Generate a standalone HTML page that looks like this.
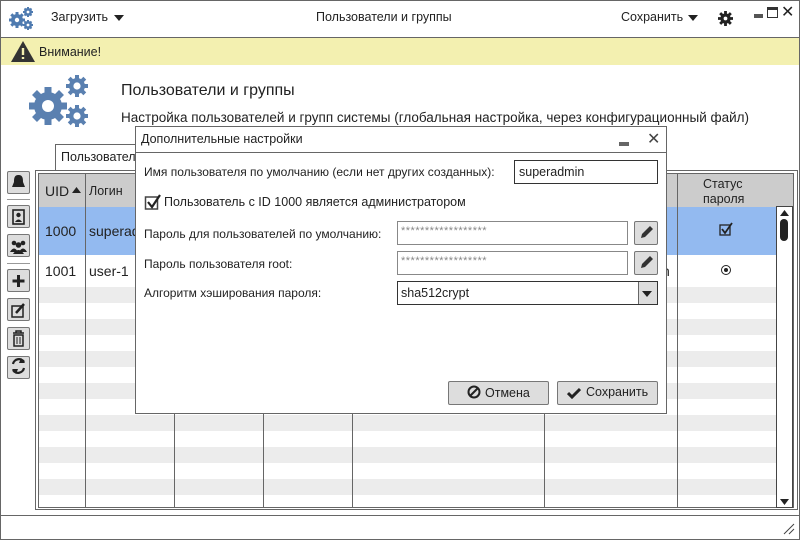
<!DOCTYPE html>
<html><head><meta charset="utf-8"><style>
*{box-sizing:border-box;margin:0;padding:0}
body{width:800px;height:540px;overflow:hidden;background:#fff;font-family:"Liberation Sans",sans-serif;font-size:12.5px;color:#222;position:relative}
.a{position:absolute}
.btn{position:absolute;background:#ddd;border:1px solid #777;border-radius:2px}
.hl{position:absolute;height:1px;background:#666}
.vl{position:absolute;width:1px;background:#666}
.t{position:absolute;white-space:nowrap}
</style></head><body>
<div class="a" style="left:0;top:0;width:800px;height:540px;border:1px solid #666"></div>
<!-- top bar -->
<svg class="a" style="left:8px;top:6px" width="28" height="26" viewBox="0 0 28 26"><g fill="#4f7bb0" stroke="#4f7bb0"><circle cx="9" cy="14" r="5.5"/><path d="M9 6V22M1 14H17M3.3 8.3L14.7 19.7M14.7 8.3L3.3 19.7" stroke-width="3"/><circle cx="20" cy="6" r="3.5"/><path d="M20 1V11M15 6H25M16.5 2.5L23.5 9.5M23.5 2.5L16.5 9.5" stroke-width="2"/><circle cx="20" cy="19" r="3.5"/><path d="M20 14V24M15 19H25M16.5 15.5L23.5 22.5M23.5 15.5L16.5 22.5" stroke-width="2"/></g><g fill="#fff"><circle cx="9" cy="14" r="2.2"/><circle cx="20" cy="6" r="1.4"/><circle cx="20" cy="19" r="1.4"/></g></svg>
<div class="t" style="left:51px;top:10px">Загрузить</div>
<svg class="a" style="left:114px;top:15px" width="10" height="6"><path d="M0 0H10L5 6Z" fill="#222"/></svg>
<div class="t" style="left:316px;top:10px">Пользователи и группы</div>
<div class="t" style="left:621px;top:10px">Сохранить</div>
<svg class="a" style="left:688px;top:15px" width="10" height="6"><path d="M0 0H10L5 6Z" fill="#222"/></svg>
<svg class="a" style="left:718px;top:11px" width="15" height="15" viewBox="0 0 16 16"><circle cx="8" cy="8" r="5.5" fill="#222"/><g stroke="#222" stroke-width="3"><path d="M8 0V16M0 8H16M2.3 2.3L13.7 13.7M13.7 2.3L2.3 13.7"/></g><circle cx="8" cy="8" r="2" fill="#fff"/></svg>
<div class="a" style="left:754px;top:14px;width:9px;height:4px;background:#555"></div>
<div class="a" style="left:767px;top:7px;width:11px;height:11px;border:1.5px solid #333;border-top-width:3px"></div>
<div class="t" style="left:781px;top:2px;font-size:16px">✕</div>
<div class="hl" style="left:0;top:37px;width:800px"></div>
<!-- warning -->
<div class="a" style="left:1px;top:38px;width:798px;height:27px;background:#f3f0b0"></div>
<svg class="a" style="left:10px;top:40px" width="26" height="23"><path d="M13 1L25 22H1Z" fill="#333"/><path d="M13 8V15M13 17V19" stroke="#f3f0b0" stroke-width="2.4"/></svg>
<div class="t" style="left:39px;top:45px">Внимание!</div>
<!-- header -->
<svg class="a" style="left:26px;top:74px" width="66" height="56" viewBox="0 0 66 56"><g fill="#5a80b0"><circle cx="22" cy="32" r="14"/><circle cx="51" cy="12" r="8"/><circle cx="51" cy="42" r="8"/></g><g stroke="#5a80b0" stroke-width="7"><path d="M22 13V51M3 32H41M8.5 18.5L35.5 45.5M35.5 18.5L8.5 45.5"/></g><g stroke="#5a80b0" stroke-width="4"><path d="M51 1V23M40 12H62M43.2 4.2L58.8 19.8M58.8 4.2L43.2 19.8M51 31V53M40 42H62M43.2 34.2L58.8 49.8M58.8 34.2L43.2 49.8"/></g><g fill="#fff"><circle cx="22" cy="32" r="6"/><circle cx="51" cy="12" r="3.6"/><circle cx="51" cy="42" r="3.6"/></g></svg>
<div class="t" style="left:121px;top:82px;font-size:16px">Пользователи и группы</div>
<div class="t" style="left:121px;top:110px;font-size:13.5px">Настройка пользователей и групп системы (глобальная настройка, через конфигурационный файл)</div>
<!-- tab -->
<div class="a" style="left:55px;top:144px;width:90px;height:27px;border:1px solid #666;border-bottom:none;background:#fff"></div>
<div class="t" style="left:61px;top:150px">Пользователи</div>
<div class="a" style="left:35px;top:170px;width:763px;height:340px;border:1px solid #666;background:#fff"></div>
<!-- table -->
<div class="a" style="left:38px;top:173px;width:756px;height:335px;border:1px solid #666;overflow:hidden;background:repeating-linear-gradient(#ececec 0 16px,#fff 16px 32px);background-position:0 113px">
 <div class="a" style="left:0;top:0;width:756px;height:33px;background:#ccc"></div>
 <div class="a" style="left:0;top:33px;width:756px;height:48px;background:#93baf0"></div>
 <div class="a" style="left:0;top:81px;width:756px;height:32px;background:#fff"></div>
</div>
<div class="vl" style="left:85px;top:174px;height:334px"></div>
<div class="vl" style="left:174px;top:174px;height:334px"></div>
<div class="vl" style="left:263px;top:174px;height:334px"></div>
<div class="vl" style="left:352px;top:174px;height:334px"></div>
<div class="vl" style="left:544px;top:174px;height:334px"></div>
<div class="vl" style="left:677px;top:174px;height:334px"></div>
<div class="t" style="left:45px;top:183px;font-size:14px">UID</div>
<svg class="a" style="left:72px;top:187px" width="9" height="6"><path d="M0 6H9L4.5 0Z" fill="#222"/></svg>
<div class="t" style="left:89px;top:184px">Логин</div>
<div class="t" style="left:703px;top:177px">Статус</div>
<div class="t" style="left:703px;top:192px">пароля</div>
<div class="t" style="left:45px;top:223px;font-size:14px">1000</div>
<div class="t" style="left:89px;top:223px;font-size:14px">superadmin</div>
<div class="t" style="left:45px;top:263px;font-size:14px">1001</div>
<div class="t" style="left:89px;top:263px;font-size:14px">user-1</div>
<div class="t" style="left:662px;top:263px;font-size:14px">n</div>
<svg class="a" style="left:719px;top:222px" width="14" height="14"><rect x="1" y="3" width="10" height="10" fill="none" stroke="#222" stroke-width="1.3"/><path d="M3 7L6 11L13 1" fill="none" stroke="#222" stroke-width="1.8"/></svg>
<div class="a" style="left:721px;top:265px;width:10px;height:10px;border:1.5px solid #222;border-radius:50%"></div>
<div class="a" style="left:724px;top:268px;width:4px;height:4px;background:#222;border-radius:50%"></div>
<!-- scrollbar -->
<div class="a" style="left:776px;top:206px;width:17px;height:302px;border:1px solid #444;background:#fff"></div>
<svg class="a" style="left:780px;top:210px" width="9" height="6"><path d="M0 6H9L4.5 0Z" fill="#222"/></svg>
<div class="a" style="left:780px;top:219px;width:8px;height:22px;background:#222;border-radius:4px"></div>
<svg class="a" style="left:780px;top:499px" width="9" height="6"><path d="M0 0H9L4.5 6Z" fill="#222"/></svg>
<!-- left toolbar -->
<div class="btn" style="left:7px;top:171px;width:23px;height:23px"></div>
<div class="hl" style="left:7px;top:199px;width:23px;background:#999"></div>
<div class="btn" style="left:7px;top:205px;width:23px;height:23px"></div>
<div class="btn" style="left:7px;top:234px;width:23px;height:23px"></div>
<div class="hl" style="left:7px;top:263px;width:23px;background:#999"></div>
<div class="btn" style="left:7px;top:269px;width:23px;height:23px"></div>
<div class="btn" style="left:7px;top:298px;width:23px;height:23px"></div>
<div class="btn" style="left:7px;top:327px;width:23px;height:23px"></div>
<div class="btn" style="left:7px;top:356px;width:23px;height:23px"></div>
<svg class="a" style="left:7px;top:171px" width="23" height="210">
 <path d="M11.5 4C7 4 7 8 7 11L5 16H18L16 11C16 8 16 4 11.5 4Z" fill="#222"/>
 <rect x="6" y="39" width="11" height="14" fill="none" stroke="#222" stroke-width="1.6"/><circle cx="11.5" cy="44" r="2.2" fill="#222"/><path d="M8 51Q11.5 46 15 51Z" fill="#222"/>
 <g fill="#222"><circle cx="7" cy="72" r="2.3"/><circle cx="16" cy="72" r="2.3"/><circle cx="11.5" cy="74" r="2.8"/><path d="M3 81Q7 74 11 81ZM12 81Q16 74 20 81ZM6 83Q11.5 75 17 83Z"/></g>
 <path d="M11.5 104V116M5.5 110H17.5" stroke="#222" stroke-width="3"/>
 <rect x="5" y="135" width="11" height="11" fill="none" stroke="#222" stroke-width="1.5"/><path d="M9 142L17 133" stroke="#222" stroke-width="2.5"/>
 <path d="M6 162H17M9 162V160H14V162M7 164H16V175H7Z" fill="none" stroke="#222" stroke-width="1.5"/><path d="M10 166V173M13 166V173" stroke="#222"/>
 <path d="M6 193A6 6 0 0 1 17 191M17 197A6 6 0 0 1 6 199" fill="none" stroke="#222" stroke-width="2.2"/><path d="M14 187L18 192L12 192Z M9 203L5 198L11 198Z" fill="#222"/>
</svg>
<!-- status bar -->
<div class="hl" style="left:0;top:515px;width:800px"></div>
<svg class="a" style="left:783px;top:523px" width="12" height="12"><path d="M1 11L11 1M6 11L11 6" stroke="#444"/></svg>
<!-- dialog -->
<div class="a" style="left:135px;top:126px;width:532px;height:288px;border:1px solid #666;background:#fff"></div>
<div class="hl" style="left:135px;top:152px;width:532px"></div>
<div class="t" style="left:141px;top:132px">Дополнительные настройки</div>
<div class="a" style="left:619px;top:142px;width:10px;height:4px;background:#666"></div>
<div class="t" style="left:647px;top:129px;font-size:16px;color:#444">✕</div>
<div class="t" style="left:144px;top:165px;font-size:12px">Имя пользователя по умолчанию (если нет других созданных):</div>
<div class="a" style="left:514px;top:160px;width:144px;height:24px;border:1.5px solid #333"></div>
<div class="t" style="left:519px;top:165px">superadmin</div>
<svg class="a" style="left:144px;top:193px" width="18" height="17"><rect x="1.5" y="4" width="12" height="12" fill="none" stroke="#444" stroke-width="1.5"/><path d="M4 9L8 14L16 2" fill="none" stroke="#222" stroke-width="2.2"/></svg>
<div class="t" style="left:164px;top:195px">Пользователь с ID 1000 является администратором</div>
<div class="t" style="left:144px;top:227px;font-size:12px">Пароль для пользователей по умолчанию:</div>
<div class="a" style="left:397px;top:221px;width:231px;height:24px;border:1px solid #888"></div>
<div class="t" style="left:401px;top:225px;color:#888;font-size:11px;letter-spacing:0.5px">******************</div>
<div class="btn" style="left:634px;top:221px;width:24px;height:24px"></div>
<div class="t" style="left:144px;top:257px;font-size:12px">Пароль пользователя root:</div>
<div class="a" style="left:397px;top:251px;width:231px;height:24px;border:1px solid #888"></div>
<div class="t" style="left:401px;top:255px;color:#888;font-size:11px;letter-spacing:0.5px">******************</div>
<div class="btn" style="left:634px;top:251px;width:24px;height:24px"></div>
<svg class="a" style="left:634px;top:221px" width="24" height="56"><path d="M7 17L8 13L16 5L19 8L11 16Z M7 47L8 43L16 35L19 38L11 46Z" fill="#333"/></svg>
<div class="t" style="left:144px;top:286px;font-size:12px">Алгоритм хэширования пароля:</div>
<div class="a" style="left:397px;top:281px;width:261px;height:24px;border:1.5px solid #333"></div>
<div class="t" style="left:401px;top:286px">sha512crypt</div>
<div class="a" style="left:638px;top:282px;width:19px;height:22px;border-left:1px solid #666;background:#ddd"></div>
<svg class="a" style="left:642px;top:291px" width="10" height="6"><path d="M0 0H10L5 6Z" fill="#222"/></svg>
<div class="btn" style="left:448px;top:381px;width:101px;height:24px"></div>
<svg class="a" style="left:467px;top:385px" width="14" height="14"><circle cx="7" cy="7" r="5.5" fill="none" stroke="#222" stroke-width="2"/><path d="M3 11L11 3" stroke="#222" stroke-width="2"/></svg>
<div class="t" style="left:485px;top:386px">Отмена</div>
<div class="btn" style="left:557px;top:381px;width:101px;height:24px"></div>
<svg class="a" style="left:567px;top:387px" width="14" height="12"><path d="M1 6L5 10L13 2" fill="none" stroke="#222" stroke-width="3"/></svg>
<div class="t" style="left:586px;top:385px">Сохранить</div>
</body></html>
